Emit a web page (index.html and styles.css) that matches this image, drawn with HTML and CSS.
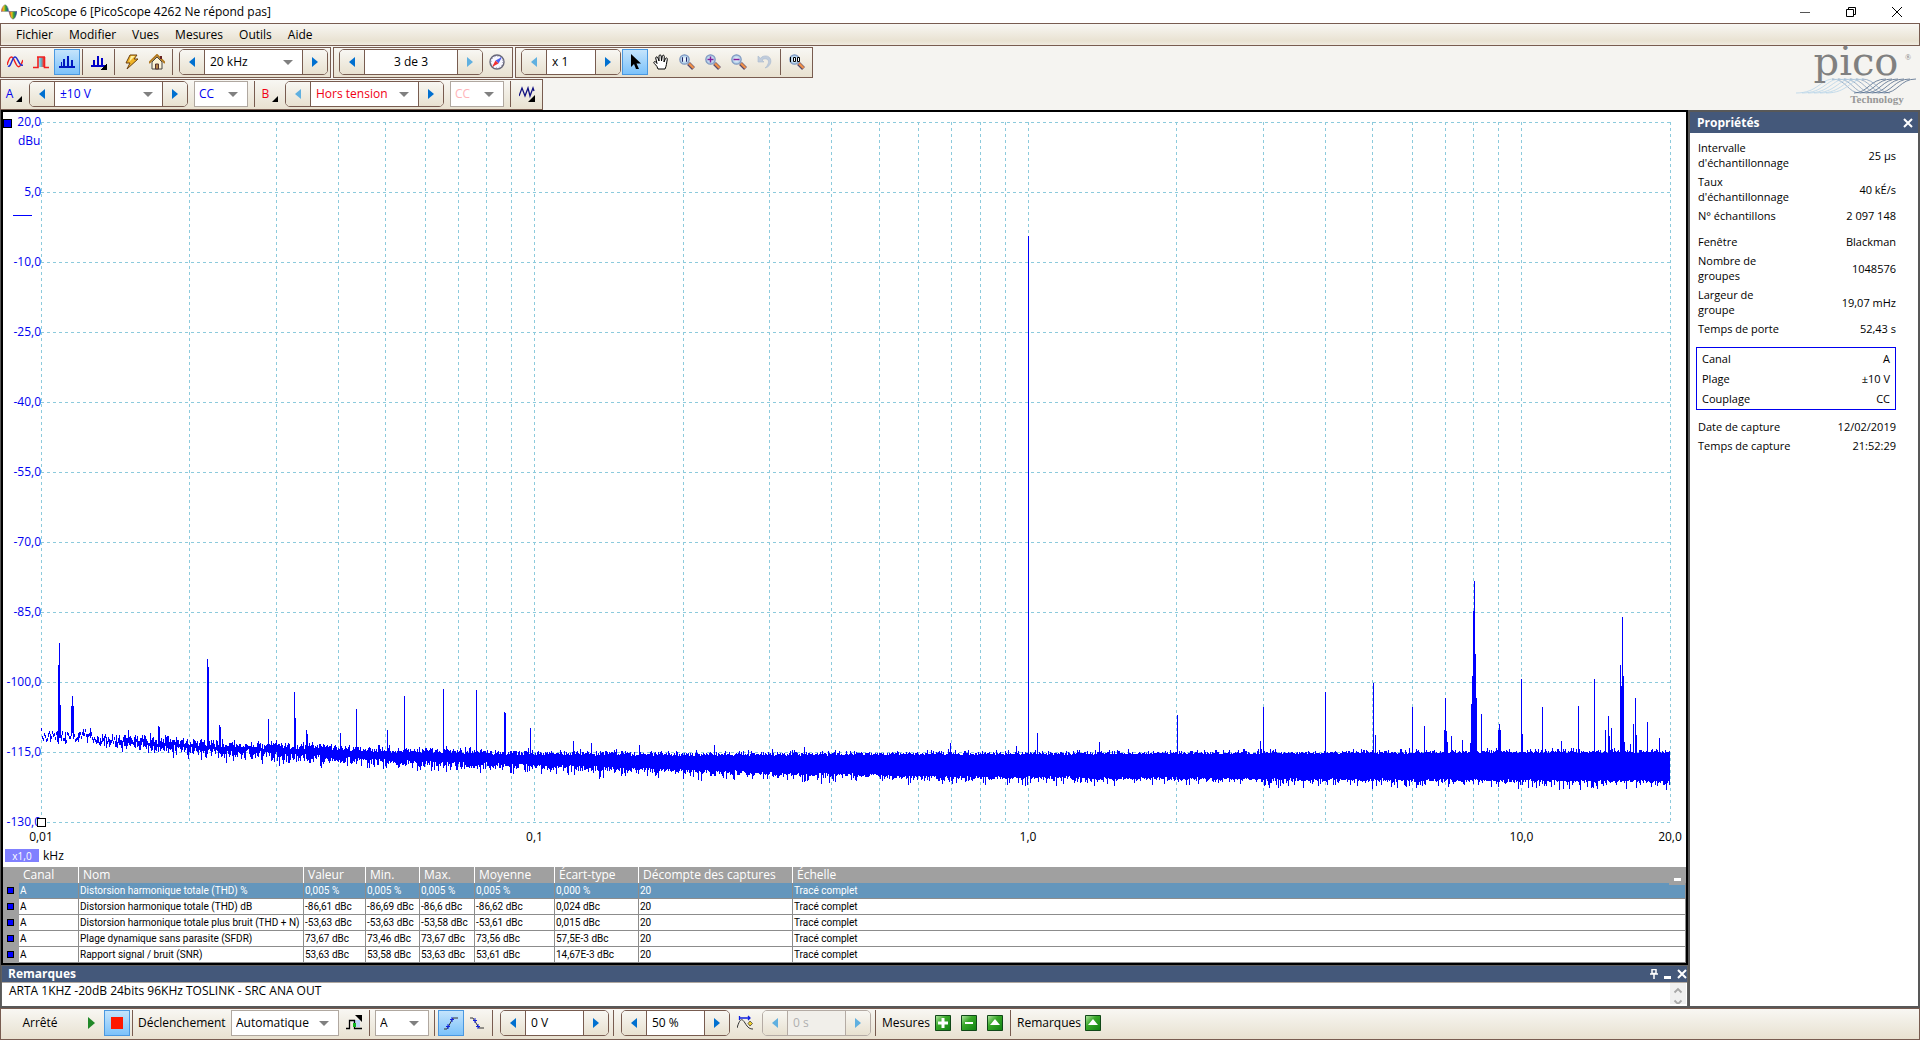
FILE: index.html
```html
<!DOCTYPE html>
<html lang="fr">
<head>
<meta charset="utf-8">
<title>PicoScope 6 [PicoScope 4262 Ne répond pas]</title>
<link rel="stylesheet" href="styles.css">
</head>
<body>
<svg class="defs" aria-hidden="true">
  <defs>
    <linearGradient id="rainbow"><stop offset="0" stop-color="#e03020"/><stop offset=".35" stop-color="#e8c020"/><stop offset=".6" stop-color="#30a030"/><stop offset="1" stop-color="#2040d0"/></linearGradient>
    <linearGradient id="pulse"><stop offset="0" stop-color="#c8eef8"/><stop offset=".5" stop-color="#58b8d0"/><stop offset="1" stop-color="#ff3020"/></linearGradient>
    <linearGradient id="green" x2="1" y2="1"><stop offset="0" stop-color="#b8e8a8"/><stop offset=".4" stop-color="#38a828"/><stop offset="1" stop-color="#108010"/></linearGradient>
    <radialGradient id="glass"><stop offset="0" stop-color="#fff"/><stop offset="1" stop-color="#9cc4e4"/></radialGradient>
    <symbol id="left" viewBox="0 0 6 10"><path d="M6 0v10L0 5z" fill="currentColor"/></symbol>
    <symbol id="right" viewBox="0 0 6 10"><path d="M0 0v10l6-5z" fill="currentColor"/></symbol>
    <symbol id="lens" viewBox="0 0 16 16"><path d="M9.500 9.500l5 5" stroke="#5a4a6a" stroke-width="4"/><path d="M10 9.500l4.500 4.500" stroke="#f09048" stroke-width="2.400"/><circle cx="5.500" cy="5.500" r="4.700" fill="url(#glass)" stroke="#8098c0" stroke-width="1.200"/></symbol>
    <symbol id="tick" viewBox="0 0 6 6"><path d="M6 0v6H0z" fill="#000"/></symbol>
    <symbol id="close" viewBox="0 0 10 10"><path d="M1 1l8 8M9 1L1 9" stroke="currentColor" stroke-width="2"/></symbol>
  </defs>
</svg>

<header class="titlebar">
  <svg class="app-icon" viewBox="0 0 16 16"><path d="M0 7.500C2-1 6-2 8 7.500z" fill="url(#rainbow)" stroke="#889" stroke-width=".5"/><path d="M8 7.500c2 10 6 10 8 0z" fill="url(#rainbow)" stroke="#446" stroke-width=".5"/></svg>
  <h1>PicoScope 6 [PicoScope 4262 Ne répond pas]</h1>
  <div class="window-buttons">
    <button aria-label="Réduire"><svg viewBox="0 0 10 10"><path d="M0 5.500h10" stroke="#555"/></svg></button>
    <button aria-label="Restaurer"><svg viewBox="0 0 10 10"><path d="M.5 2.500h7v7h-7zM2.500 2.500v-2h7v7h-2" fill="none" stroke="#000"/></svg></button>
    <button aria-label="Fermer"><svg viewBox="0 0 10 10"><path d="M0 0l10 10M10 0L0 10" stroke="#000"/></svg></button>
  </div>
</header>

<nav class="menubar">
  <button>Fichier</button><button>Modifier</button><button>Vues</button><button>Mesures</button><button>Outils</button><button>Aide</button>
</nav>

<div class="toolbars">
  <div class="toolrows">
    <div class="toolrow">
      <div class="group">
        <button class="tool" aria-label="Mode oscilloscope"><svg viewBox="0 0 16 16"><path d="M0 11C3 1 5 1 8 8s5 6 8-2" fill="none" stroke="#f02020" stroke-width="1.500"/><path d="M1 12C4 14 5 3 8 3s4 10 8 8" fill="none" stroke="#2030d0" stroke-width="1.500"/></svg></button>
        <button class="tool" aria-label="Mode persistance"><svg viewBox="0 0 16 16"><path d="M5 3h6v10H5z" fill="url(#pulse)"/><path d="M0 13.500h5V3M4 3h8M11.500 3v10.500H16" fill="none" stroke="#f02020" stroke-width="1.600"/></svg></button>
        <button class="tool on" aria-label="Mode spectre"><svg viewBox="0 0 16 16" shape-rendering="crispEdges"><path d="M0 12h16v2H0zM2 8h1v4H2zM4 5h2v7H4zM8 2h2v10H8zM12 6h2v6h-2z" fill="#0018c0"/></svg></button>
        <span class="sep"></span>
        <button class="tool" aria-label="Options spectre"><svg viewBox="0 0 16 16" shape-rendering="crispEdges"><path d="M0 11h14v2H0zM2 6h2v5H2zM6 2h2v9H6zM10 4h2v7h-2z" fill="#0000c8"/><path d="M16 9v7H9z"/></svg></button>
        <span class="sep"></span>
        <button class="tool" aria-label="Configuration automatique"><svg viewBox="0 0 16 16"><path d="M7 1h7l-3 4h4L4 15l3-6H3z" fill="#f0b428" stroke="#6a4010"/><path d="M8 2h4L6 8z" fill="#fff0a0"/></svg></button>
        <button class="tool" aria-label="Accueil"><svg viewBox="0 0 16 16"><path d="M3 8l5-5 5 5v7H3z" fill="#fbf3d8" stroke="#444"/><path d="M0 9l8-8 8 8" fill="none" stroke="#b07820" stroke-width="2"/><path d="M6.500 10h3v5h-3z" fill="#b88848" stroke="#533"/><path d="M12 2v3" stroke="#622" stroke-width="2"/></svg></button>
        <span class="sep"></span>
        <div class="spin wide1"><button aria-label="Gamme précédente"><svg><use href="#left"/></svg></button><span class="pick"><select aria-label="Gamme de fréquences"><option>20 kHz</option></select></span><button aria-label="Gamme suivante"><svg><use href="#right"/></svg></button></div>
      </div>
      <div class="group">
        <div class="spin wide2"><button aria-label="Tampon précédent"><svg><use href="#left"/></svg></button><input class="center" aria-label="Tampon" value="3 de 3"><button disabled aria-label="Tampon suivant"><svg><use href="#right"/></svg></button></div>
        <button class="tool" aria-label="Navigateur de tampons"><svg viewBox="0 0 16 16"><circle cx="8" cy="8" r="7" fill="#f8f8ff" stroke="#667" stroke-width="1.400"/><circle cx="8" cy="8" r="5.800" fill="none" stroke="#88a" stroke-width="1" stroke-dasharray="1 2"/><path d="M13 3L6.500 6.500l3 3z" fill="#5060f0"/><path d="M3 13l3.500-6.500 3 3z" fill="#f03030"/></svg></button>
      </div>
      <div class="group">
        <div class="spin narrow"><button disabled aria-label="Zoom inférieur"><svg><use href="#left"/></svg></button><input aria-label="Facteur de zoom" value="x 1"><button aria-label="Zoom supérieur"><svg><use href="#right"/></svg></button></div>
        <button class="tool on" aria-label="Sélection"><svg viewBox="0 0 16 16"><path d="M4 0v13l3-3 2 5h3L9.500 9.500H14z"/></svg></button>
        <button class="tool" aria-label="Main"><svg viewBox="0 0 16 16"><path d="M5 15C4 11 1 10 .8 8.500 1 7 3 7.500 4 9.500L2.700 4c0-1.500 1.800-1.500 2.200 0L6 7V2c.2-1.500 2-1.500 2.200 0l.3 5 .8-5c.5-1.200 2-1 2 .3L11 8l1.500-3.500c.7-1 2.200-.5 1.800.8C13.500 9 13.500 12 12 15z" fill="#fff" stroke="#000"/></svg></button>
        <button class="tool" aria-label="Zoom fenêtre"><svg viewBox="0 0 16 16"><use href="#lens"/><path d="M4 3.500H3.500v4H4M7 3.500h.5v4H7" fill="none" stroke="#226"/></svg></button>
        <button class="tool" aria-label="Zoom avant"><svg viewBox="0 0 16 16"><use href="#lens"/><path d="M2.500 5.500h6M5.500 2.500v6" stroke="#80209c" stroke-width="1.500"/></svg></button>
        <button class="tool" aria-label="Zoom arrière"><svg viewBox="0 0 16 16"><use href="#lens"/><path d="M2.500 5.500h6" stroke="#80209c" stroke-width="1.500"/></svg></button>
        <button class="tool" disabled aria-label="Annuler le zoom"><svg viewBox="0 0 16 16"><path d="M1 2v6h6L5 6c4-3 8 0 6 4-.8 2-2 3-3 4 4-1 7-5 5.500-9C12 1 6 1 3.500 4.300z" fill="#c0ccdc" stroke="#a8b8cc" stroke-width=".6"/></svg></button>
        <span class="sep"></span>
        <button class="tool" aria-label="Zoom 100 %"><svg viewBox="0 0 16 16"><use href="#lens"/><path d="M1.500 3v5M4.500 3.500h2v4h-2zM8.500 3.500h2v4h-2z" fill="#fff" stroke="#000"/></svg></button>
      </div>
    </div>
    <div class="toolrow">
      <div class="group">
        <button class="channel blue">A<svg><use href="#tick"/></svg></button>
        <div class="spin range"><button aria-label="Plage A inférieure"><svg><use href="#left"/></svg></button><span class="pick blue"><select aria-label="Plage A"><option>±10 V</option></select></span><button aria-label="Plage A supérieure"><svg><use href="#right"/></svg></button></div>
        <span class="pick boxed coupling blue"><select aria-label="Couplage A"><option>CC</option></select></span>
        <span class="sep"></span>
        <button class="channel red">B<svg><use href="#tick"/></svg></button>
        <div class="spin range"><button disabled aria-label="Plage B inférieure"><svg><use href="#left"/></svg></button><span class="pick red"><select aria-label="Plage B"><option>Hors tension</option></select></span><button aria-label="Plage B supérieure"><svg><use href="#right"/></svg></button></div>
        <span class="pick boxed coupling faded"><select disabled aria-label="Couplage B"><option>CC</option></select></span>
        <span class="sep"></span>
        <button class="tool" aria-label="Voies mathématiques"><svg viewBox="0 0 16 16"><path d="M0 10L3 2l3 8 3-8 2 8 3-8 1 3" fill="none" stroke="#101080" stroke-width="1.300"/><path d="M16 9v7H9z"/></svg></button>
      </div>
    </div>
  </div>
  <svg class="logo" viewBox="0 0 124 62" role="img" aria-label="pico Technology">
    <g id="waves" fill="none"></g>
    <text class="logo-name" x="60" y="28">pico</text>
    <text class="logo-mark" x="112" y="13">®</text>
    <text class="logo-sub" x="81" y="56">Technology</text>
  </svg>
</div>

<main class="workspace">
  <div class="left">
    <section class="scope">
      <div class="chart">
        <span class="marker"></span>
        <span class="zero"></span>
        <span class="unit">dBu</span>
        <div class="yaxis"><span>20,0</span><span>5,0</span><span>-10,0</span><span>-25,0</span><span>-40,0</span><span>-55,0</span><span>-70,0</span><span>-85,0</span><span>-100,0</span><span>-115,0</span><span>-130,0</span></div>
        <div class="plot">
          <svg viewBox="0 0 1629 701" preserveAspectRatio="none"><path id="grid"/><path id="trace"/></svg>
          <span class="origin"></span>
        </div>
        <div class="xaxis"><span>0,01</span><span>0,1</span><span>1,0</span><span>10,0</span><span>20,0</span></div>
      </div>
      <div class="scale"><button>x1,0</button><span>kHz</span></div>
      <div class="measures">
        <button class="collapse" aria-label="Réduire les mesures"></button>
        <table>
          <colgroup><col class="c0"><col class="c1"><col class="c2"><col class="c3"><col class="c4"><col class="c5"><col class="c6"><col class="c7"><col class="c8"><col></colgroup>
          <thead><tr><th></th><th>Canal</th><th>Nom</th><th>Valeur</th><th>Min.</th><th>Max.</th><th>Moyenne</th><th>Écart-type</th><th>Décompte des captures</th><th>Échelle</th></tr></thead>
          <tbody>
            <tr class="selected"><td><i></i></td><td>A</td><td>Distorsion harmonique totale (THD) %</td><td>0,005 %</td><td>0,005 %</td><td>0,005 %</td><td>0,005 %</td><td>0,000 %</td><td>20</td><td>Tracé complet</td></tr>
            <tr><td><i></i></td><td>A</td><td>Distorsion harmonique totale (THD) dB</td><td>-86,61 dBc</td><td>-86,69 dBc</td><td>-86,6 dBc</td><td>-86,62 dBc</td><td>0,024 dBc</td><td>20</td><td>Tracé complet</td></tr>
            <tr><td><i></i></td><td>A</td><td>Distorsion harmonique totale plus bruit (THD + N)</td><td>-53,63 dBc</td><td>-53,63 dBc</td><td>-53,58 dBc</td><td>-53,61 dBc</td><td>0,015 dBc</td><td>20</td><td>Tracé complet</td></tr>
            <tr><td><i></i></td><td>A</td><td>Plage dynamique sans parasite (SFDR)</td><td>73,67 dBc</td><td>73,46 dBc</td><td>73,67 dBc</td><td>73,56 dBc</td><td>57,5E-3 dBc</td><td>20</td><td>Tracé complet</td></tr>
            <tr><td><i></i></td><td>A</td><td>Rapport signal / bruit (SNR)</td><td>53,63 dBc</td><td>53,58 dBc</td><td>53,63 dBc</td><td>53,61 dBc</td><td>14,67E-3 dBc</td><td>20</td><td>Tracé complet</td></tr>
          </tbody>
        </table>
      </div>
    </section>
    <section class="notes">
      <div class="panel-head"><label for="notes">Remarques</label>
        <button aria-label="Épingler"><svg viewBox="0 0 10 10"><path d="M3 .5h4v4H3zM1 5h8M5 5v5" fill="none" stroke="#fff" stroke-width="1.500"/></svg></button>
        <button aria-label="Réduire"><svg viewBox="0 0 10 10"><path d="M1 8.500h7" stroke="#fff" stroke-width="3"/></svg></button>
        <button aria-label="Fermer"><svg viewBox="0 0 10 10"><use href="#close"/></svg></button>
      </div>
      <div class="note-body">
        <textarea id="notes" rows="1">ARTA 1KHZ -20dB 24bits 96KHz TOSLINK - SRC ANA OUT</textarea>
        <svg class="scroll" viewBox="0 0 16 21"><path d="M0 0h16v21H0z" fill="#f0f0f0"/><path d="M4.500 9.500L8 6l3.500 3.500M4.500 17.500L8 21l3.500-3.500" fill="none" stroke="#a8a8a8" stroke-width="1.800"/></svg>
      </div>
    </section>
  </div>
  <aside class="props">
    <div class="panel-head"><h2>Propriétés</h2><button aria-label="Fermer"><svg viewBox="0 0 10 10"><use href="#close"/></svg></button></div>
    <dl>
      <div><dt>Intervalle<br>d'échantillonnage</dt><dd>25 µs</dd></div>
      <div><dt>Taux<br>d'échantillonnage</dt><dd>40 kÉ/s</dd></div>
      <div><dt>N° échantillons</dt><dd>2 097 148</dd></div>
    </dl>
    <dl>
      <div><dt>Fenêtre</dt><dd>Blackman</dd></div>
      <div><dt>Nombre de<br>groupes</dt><dd>1048576</dd></div>
      <div><dt>Largeur de<br>groupe</dt><dd>19,07 mHz</dd></div>
      <div><dt>Temps de porte</dt><dd>52,43 s</dd></div>
    </dl>
    <dl class="framed">
      <div><dt>Canal</dt><dd>A</dd></div>
      <div><dt>Plage</dt><dd>±10 V</dd></div>
      <div><dt>Couplage</dt><dd>CC</dd></div>
    </dl>
    <dl>
      <div><dt>Date de capture</dt><dd>12/02/2019</dd></div>
      <div><dt>Temps de capture</dt><dd>21:52:29</dd></div>
    </dl>
  </aside>
</main>

<footer class="statusbar">
  <span class="state">Arrêté</span>
  <button class="tool" aria-label="Démarrer"><svg viewBox="0 0 16 16"><path d="M5 2v12l7-6z" fill="#208828"/></svg></button>
  <button class="tool on" aria-label="Arrêter"><svg viewBox="0 0 16 16"><path d="M2 2h12v12H2z" fill="#ff1800"/></svg></button>
  <span class="sep"></span>
  <label class="trigger" for="trigger">Déclenchement</label>
  <span class="pick boxed mode"><select id="trigger"><option>Automatique</option></select></span>
  <button class="tool" aria-label="Options de déclenchement"><svg viewBox="0 0 16 16"><path d="M7 5h7v7H7z" fill="#c0d4f8"/><path d="M0 13.500h3.500v-8h5v8H16" fill="none" stroke="#000" stroke-width="1.300"/><path d="M7 8h3v4H7z" fill="#10b020"/><path d="M9 0h7v7z"/></svg></button>
  <span class="sep"></span>
  <span class="pick boxed source"><select aria-label="Source de déclenchement"><option>A</option></select></span>
  <span class="sep"></span>
  <button class="tool on" aria-label="Front montant"><svg viewBox="0 0 16 16"><path d="M1 14h3l6-11h5" fill="none" stroke="#333"/><path d="M9 2v5M7 4.500h4M5 9v5M3 11.500h4" stroke="#1020e0"/></svg></button>
  <button class="tool" aria-label="Front descendant"><svg viewBox="0 0 16 16"><path d="M1 3h3l6 10h5" fill="none" stroke="#333"/><path d="M6 3v5M4 5.500h4M9 9v5M7 11.500h4" stroke="#1020e0"/></svg></button>
  <span class="sep"></span>
  <div class="spin small"><button aria-label="Seuil inférieur"><svg><use href="#left"/></svg></button><input aria-label="Seuil" value="0 V"><button aria-label="Seuil supérieur"><svg><use href="#right"/></svg></button></div>
  <span class="sep"></span>
  <div class="spin small"><button aria-label="Moins de pré-déclenchement"><svg><use href="#left"/></svg></button><input aria-label="Pré-déclenchement" value="50 %"><button aria-label="Plus de pré-déclenchement"><svg><use href="#right"/></svg></button></div>
  <button class="tool" aria-label="Délai post-déclenchement"><svg viewBox="0 0 16 16"><path d="M0 13C3 3 5 3 8 8s5 6 8 6" fill="none" stroke="#333"/><path d="M2 3h11M11 1l2 2-2 2M2.500 1v4" fill="none" stroke="#1020e0" stroke-width="1.300"/><path d="M13 6l2.500 2.500L13 11l-2-2.500z" fill="#f0d030" stroke="#333" stroke-width=".7"/></svg></button>
  <div class="spin small off"><button disabled aria-label="Délai inférieur"><svg><use href="#left"/></svg></button><input disabled aria-label="Délai" value="0 s"><button disabled aria-label="Délai supérieur"><svg><use href="#right"/></svg></button></div>
  <span class="sep"></span>
  <span class="caption measures-caption">Mesures</span>
  <button class="tool" aria-label="Ajouter une mesure"><svg viewBox="0 0 16 16"><path d="M.5.5h15v15H.5z" fill="url(#green)" stroke="#104818"/><path d="M3 8h10M8 3v10" stroke="#fff" stroke-width="3"/></svg></button>
  <button class="tool" aria-label="Supprimer une mesure"><svg viewBox="0 0 16 16"><path d="M.5.5h15v15H.5z" fill="url(#green)" stroke="#104818"/><path d="M4 8h8" stroke="#fff" stroke-width="2"/></svg></button>
  <button class="tool" aria-label="Afficher les mesures"><svg viewBox="0 0 16 16"><path d="M.5.5h15v15H.5z" fill="url(#green)" stroke="#104818"/><path d="M3 10l5-6 5 6z" fill="#fff"/></svg></button>
  <span class="sep"></span>
  <span class="caption notes-caption">Remarques</span>
  <button class="tool" aria-label="Afficher les remarques"><svg viewBox="0 0 16 16"><path d="M.5.5h15v15H.5z" fill="url(#green)" stroke="#104818"/><path d="M3 10l5-6 5 6z" fill="#fff"/></svg></button>
</footer>
<script src="chart.js"></script>
</body>
</html>
```
FILE: styles.css
```css
* { box-sizing: border-box; }
body {
  margin: 0; min-height: 100vh; display: flex; flex-direction: column;
  background: #f5f4f1; color: #000;
  font: 12px/16px "Open Sans", "Noto Sans", sans-serif;
}
button, input, select, textarea { font: inherit; color: inherit; margin: 0; padding: 0; border: 0; background: none; border-radius: 0; }
button { display: flex; align-items: center; justify-content: center; }
h1, h2, dl, dt, dd { margin: 0; font-size: inherit; font-weight: normal; }
.defs { position: absolute; width: 0; height: 0; }
.blue { color: #0000f0; }
.red { color: #f00014; }

.titlebar { display: flex; align-items: center; height: 23px; background: #fff; }
.app-icon { width: 16px; height: 16px; margin: 0 3px 0 1px; }
.titlebar h1 { flex: 1; }
.window-buttons { display: flex; }
.window-buttons button { width: 46px; height: 23px; }
.window-buttons svg { width: 10px; height: 10px; overflow: visible; }

.menubar {
  display: flex; gap: 16px; padding: 0 15px; height: 23px;
  border: 1px solid #785c50; background: linear-gradient(#f8f7f3, #e9e2d2 80%, #f0ebe0);
}

.toolbars { display: flex; justify-content: space-between; padding: 1px 0 0; }
.toolrows { display: flex; flex-direction: column; gap: 1px; }
.toolrow { display: flex; gap: 2px; }
.group {
  display: flex; align-items: center; height: 31px; padding: 0 2px 1px 1px;
  border: 1px solid #785c50; background: linear-gradient(#f8f7f3, #e8e1d0);
}
.group + .group { padding: 0 2px 1px 4px; }
.tool { width: 26px; height: 26px; flex: none; }
.tool svg { width: 16px; height: 16px; }
.tool.on { border: 1px solid #4a98e0; background: linear-gradient(#c4e4fc, #7cc2fa); }
.sep { width: 1px; height: 26px; margin: 0 3px 0 2px; background: #785c50; flex: none; }
.spin { display: flex; height: 26px; margin: 0 1px; border: 1px solid #785c50; border-radius: 5px; overflow: hidden; background: #fff; flex: none; }
.spin > button { width: 25px; color: #0070d0; background: linear-gradient(#f8f7f3, #e8e1d0); flex: none; }
.spin > button:first-child { border-right: 1px solid #785c50; }
.spin > button:last-child { border-left: 1px solid #785c50; }
.spin > button:disabled { color: #60b0e0; }
.spin > button svg { width: 6px; height: 10px; }
.spin input { flex: 1; min-width: 0; padding: 0 5px; }
.spin input.center { text-align: center; }
.spin.off { border-color: #b4aba4; background: #f1efea; color: #b0b0b0; }
.spin.off > button { border-color: #b4aba4; }
.wide1 { width: 149px; margin: 0 0 0 3px; }
.wide2 { width: 144px; }
.narrow { width: 100px; }
.range { width: 159px; }
.small { width: 109px; margin: 0 2px 0 4px; }
.pick { display: flex; position: relative; flex: 1; }
.pick::after {
  content: ""; position: absolute; right: 9px; top: 50%; margin-top: -2px; pointer-events: none;
  border: 5px solid transparent; border-top-color: #808080; border-bottom: 0;
}
.pick select { appearance: none; flex: 1; min-width: 0; padding: 0 5px; opacity: 1; }
.boxed { flex: none; height: 26px; border: 1px solid #b0a8a0; background: #fff; }
.boxed select { padding: 0 4px; }
.coupling { width: 54px; margin: 0 4px 0 5px; }
.faded { color: #ffb4b8; }
.channel { width: 26px; height: 26px; padding: 0 2px 0 0; gap: 3px; }
.channel svg { width: 6px; height: 6px; margin: 10px 0 0; }
.logo { width: 124px; height: 62px; overflow: visible; }
.logo text { text-anchor: middle; fill: #808080; }
.logo .logo-name { font: 40px "DejaVu Serif", serif; }
.logo .logo-mark { font: 8px "Liberation Serif", serif; }
.logo .logo-sub { font: bold 11px "Liberation Serif", serif; fill: #989898; }

.workspace { flex: 1; display: flex; border: 1px solid #585858; border-width: 0 1px 2px; }
.left { flex: 1; min-width: 0; display: flex; flex-direction: column; background: #606060; }
.scope { flex: 1; display: flex; flex-direction: column; background: #fff; border: 2px solid #000; }
.chart { flex: 1; position: relative; display: grid; grid-template: 1fr 26px / 38px 1fr; padding: 10px 16px 0 0; }
.yaxis { display: flex; flex-direction: column; justify-content: space-between; color: #0000f0; }
.yaxis span { height: 0; display: flex; align-items: center; justify-content: flex-end; }
.plot { position: relative; }
.plot svg { position: absolute; width: 100%; height: 100%; overflow: visible; shape-rendering: crispEdges; }
.plot path { fill: none; vector-effect: non-scaling-stroke; }
#grid { stroke: #8ccadc; stroke-dasharray: 3 3; }
#trace { stroke: #00f; }
.xaxis { grid-column: 2; display: grid; grid-template-columns: 1000fr 1000fr 1000fr 301fr 0; align-items: center; padding: 3px 0 0; }
.xaxis span { width: 0; display: flex; justify-content: center; white-space: nowrap; }
.marker { position: absolute; left: 0; top: 7px; width: 9px; height: 9px; background: #00f; border: 1px solid #000; }
.zero { position: absolute; left: 10px; top: 103px; width: 19px; height: 1px; background: #00f; }
.unit { position: absolute; left: 15px; top: 21px; color: #0000f0; }
.origin { position: absolute; left: -4px; bottom: -4px; width: 9px; height: 9px; border: 1px solid #000; background: #fff; }
.scale { display: flex; align-items: center; gap: 4px; height: 18px; padding: 0 2px 4px; }
.scale button { width: 34px; height: 13px; background: #8080ff; color: #fff; font-size: 10px; }

.measures { position: relative; }
.collapse { position: absolute; right: 1px; top: 2px; width: 16px; height: 16px; background: #a0a0a0; z-index: 1; }
.collapse::after { content: ""; width: 7px; height: 3px; margin: 6px 0 0; background: #fff; }
table { width: 100%; table-layout: fixed; border-collapse: collapse; font-size: 10px; line-height: 15px; }
th { height: 16px; padding: 0 0 0 4px; background: #a0a0a0; color: #fff; font-size: 12px; font-weight: normal; text-align: left; line-height: 15px; border-left: 1px solid #fff; white-space: nowrap; }
th:first-child, th:nth-child(2) { border-left-color: #a0a0a0; }
td { height: 16px; padding: 0 0 0 1px; border: 1px solid #8c8c8c; border-top: 0; white-space: nowrap; font-family: Roboto, sans-serif; }
td:first-child { background: #a0a0a0; border-color: #a0a0a0; padding: 0 0 0 4px; }
td i { display: block; width: 5px; height: 5px; background: #00f; outline: 1px solid #000; }
.selected td:not(:first-child) { background: #6496bc; color: #fff; }
.c0 { width: 15px; } .c1 { width: 60px; } .c2 { width: 225px; } .c3 { width: 62px; } .c4 { width: 54px; }
.c5 { width: 55px; } .c6 { width: 80px; } .c7 { width: 84px; } .c8 { width: 154px; }

.panel-head { display: flex; align-items: center; background: #44587a; color: #fff; font-weight: bold; padding: 0 0 0 6px; gap: 4px; }
.panel-head h2, .panel-head label { flex: 1; font-weight: bold; }
.panel-head svg { width: 10px; height: 10px; }
.notes { padding: 1px 1px 0; }
.notes .panel-head { height: 16px; }
.note-body { display: flex; height: 24px; padding: 0 1px 3px; background: #fff; border-top: 1px solid #b0a8a0; }
.note-body textarea { flex: 1; resize: none; overflow: hidden; padding: 0 6px; outline: 0; }
.scroll { width: 16px; height: 21px; }

.props { width: 231px; background: #fff; border: solid #585858; border-width: 2px 1px 0 2px; font-size: 11px; line-height: 15px; }
.props .panel-head { height: 21px; padding: 0 5px 0 7px; font-size: 12px; }
.props dl { display: flex; flex-direction: column; gap: 4px; padding: 0 22px 0 8px; margin: 7px 0 11px; }
.props dl div { display: flex; align-items: center; justify-content: space-between; }
.props dd { text-align: right; }
.props dl.framed { gap: 5px; margin: 10px 22px 9px 6px; padding: 3px 5px; border: 1px solid #0000f0; }
.props dl + dl { margin-top: 0; }

.statusbar {
  display: flex; align-items: center; height: 32px; padding: 0 1px 2px;
  border: 1px solid #785c50; background: linear-gradient(#f8f7f3, #e8e1d0);
}
.state { width: 76px; text-align: center; }
.trigger { width: 95px; padding: 0 2px; }
.mode { width: 108px; margin: 0 2px 0 0; }
.source { width: 54px; margin: 0 3px 0 2px; }
.small + .sep { margin: 0 3px 0 2px; }
.caption { padding: 0 0 0 3px; white-space: nowrap; }
.measures-caption { width: 51px; }
.notes-caption { width: 66px; }
```
FILE: chart.js
```js
const LEFT = 41, TOP = 122, WIDTH = 1629, HEIGHT = 701;
const DECADE = WIDTH / 3.30103;

// Logarithmic frequency lines, 10 Hz to 20 kHz, and a level line each 15 dB
let grid = '';
for (let d = 0; d < 4; d++) {
  for (let m = 1; m < 10; m++) {
    const x = (d + Math.log10(m)) * DECADE;
    if (x <= WIDTH + 1) grid += `M${x.toFixed(1)} 0V${HEIGHT}`;
  }
}
for (let i = 0; i <= 10; i++) grid += `M0 ${(i * HEIGHT / 10).toFixed(1)}H${WIDTH}`;
document.getElementById('grid').setAttribute('d', grid);

// Noise floor envelope: x, upper edge, lower edge
const floor = [[41, 732, 736], [80, 732, 740], [110, 734, 745], [150, 737, 751], [200, 740, 755], [300, 744, 761],
  [400, 748, 766], [520, 751, 769], [700, 753, 774], [900, 753, 778], [1030, 753, 779], [1300, 752, 781], [1671, 751, 783]];
const peaks = [[58, 665], [59, 643], [60, 705], [71, 706], [72, 696], [73, 706], [158, 726], [159, 727], [207, 659], [208, 667],
  [219, 725], [220, 727], [268, 719], [294, 692], [295, 718], [306, 730], [307, 734], [340, 733], [356, 709], [387, 730], [404, 696],
  [443, 689], [476, 690], [504, 712], [505, 713], [530, 728], [573, 741], [591, 743], [639, 745], [714, 745], [804, 747], [950, 743],
  [1016, 746], [1028, 236], [1037, 733], [1099, 742], [1177, 715], [1260, 741], [1263, 707], [1325, 692], [1373, 683], [1375, 735],
  [1412, 707], [1424, 726], [1444, 730], [1445, 698], [1446, 731], [1447, 742], [1451, 736], [1462, 740], [1470, 743], [1471, 704],
  [1472, 676], [1473, 611], [1474, 581], [1475, 654], [1476, 698], [1481, 714], [1498, 730], [1499, 724], [1500, 730], [1521, 679],
  [1522, 734], [1542, 707], [1561, 741], [1578, 706], [1594, 679], [1605, 730], [1608, 716], [1609, 736], [1611, 728], [1620, 665],
  [1621, 686], [1622, 617], [1623, 676], [1624, 742], [1630, 744], [1633, 724], [1635, 698], [1636, 735], [1647, 722], [1659, 738]];
const peakAt = new Map(peaks);

let seed = 7;
const random = () => (seed = (seed * 16807) % 2147483647) / 2147483647;

let trace = '', k = 0, wander = 0;
for (let x = LEFT; x < LEFT + WIDTH; x++) {
  while (x >= floor[k + 1][0]) k++;
  const [x0, t0, b0] = floor[k], [x1, t1, b1] = floor[k + 1];
  const f = (x - x0) / (x1 - x0);
  // The few bins at low frequency make a thin, wandering line
  const sparse = Math.max(0, 1 - (x - LEFT) / 300);
  const rough = Math.max(0, 1 - (x - LEFT) / 900);
  wander = wander * 0.5 + (random() - 0.5) * 7 * sparse;
  let top = t0 + f * (t1 - t0) + wander - Math.pow(random(), 4) * 4 + random() * (2 + rough * 5);
  const bottom = b0 + f * (b1 - b0) + wander + Math.pow(random(), 4) * 8 - random() * (3 + rough * 6);
  if (peakAt.has(x)) top = peakAt.get(x);
  trace += `M${x - LEFT + 0.5} ${Math.round(top) - TOP}V${Math.round(Math.max(bottom, top + 3)) - TOP}`;
}
document.getElementById('trace').setAttribute('d', trace);

// Bundle of sine curves in the logo
const waves = document.getElementById('waves');
for (let i = 0; i < 6; i++) {
  const s = i * 6, p = document.createElementNS('http://www.w3.org/2000/svg', 'path');
  p.setAttribute('d', `M${s} 46c22 0 24-14 38-14`);
  p.setAttribute('stroke', '#b8d4e8');
  p.setAttribute('stroke-width', '.8');
  const q = p.cloneNode();
  q.setAttribute('d', `M${s + 36} 32c14 0 16 14 28 14`);
  q.setAttribute('stroke', '#88a0bc');
  const r = p.cloneNode();
  r.setAttribute('d', `M${s + 58} 46c14 0 16-14 32-14`);
  r.setAttribute('stroke', '#506888');
  waves.append(p, q, r);
}
```
